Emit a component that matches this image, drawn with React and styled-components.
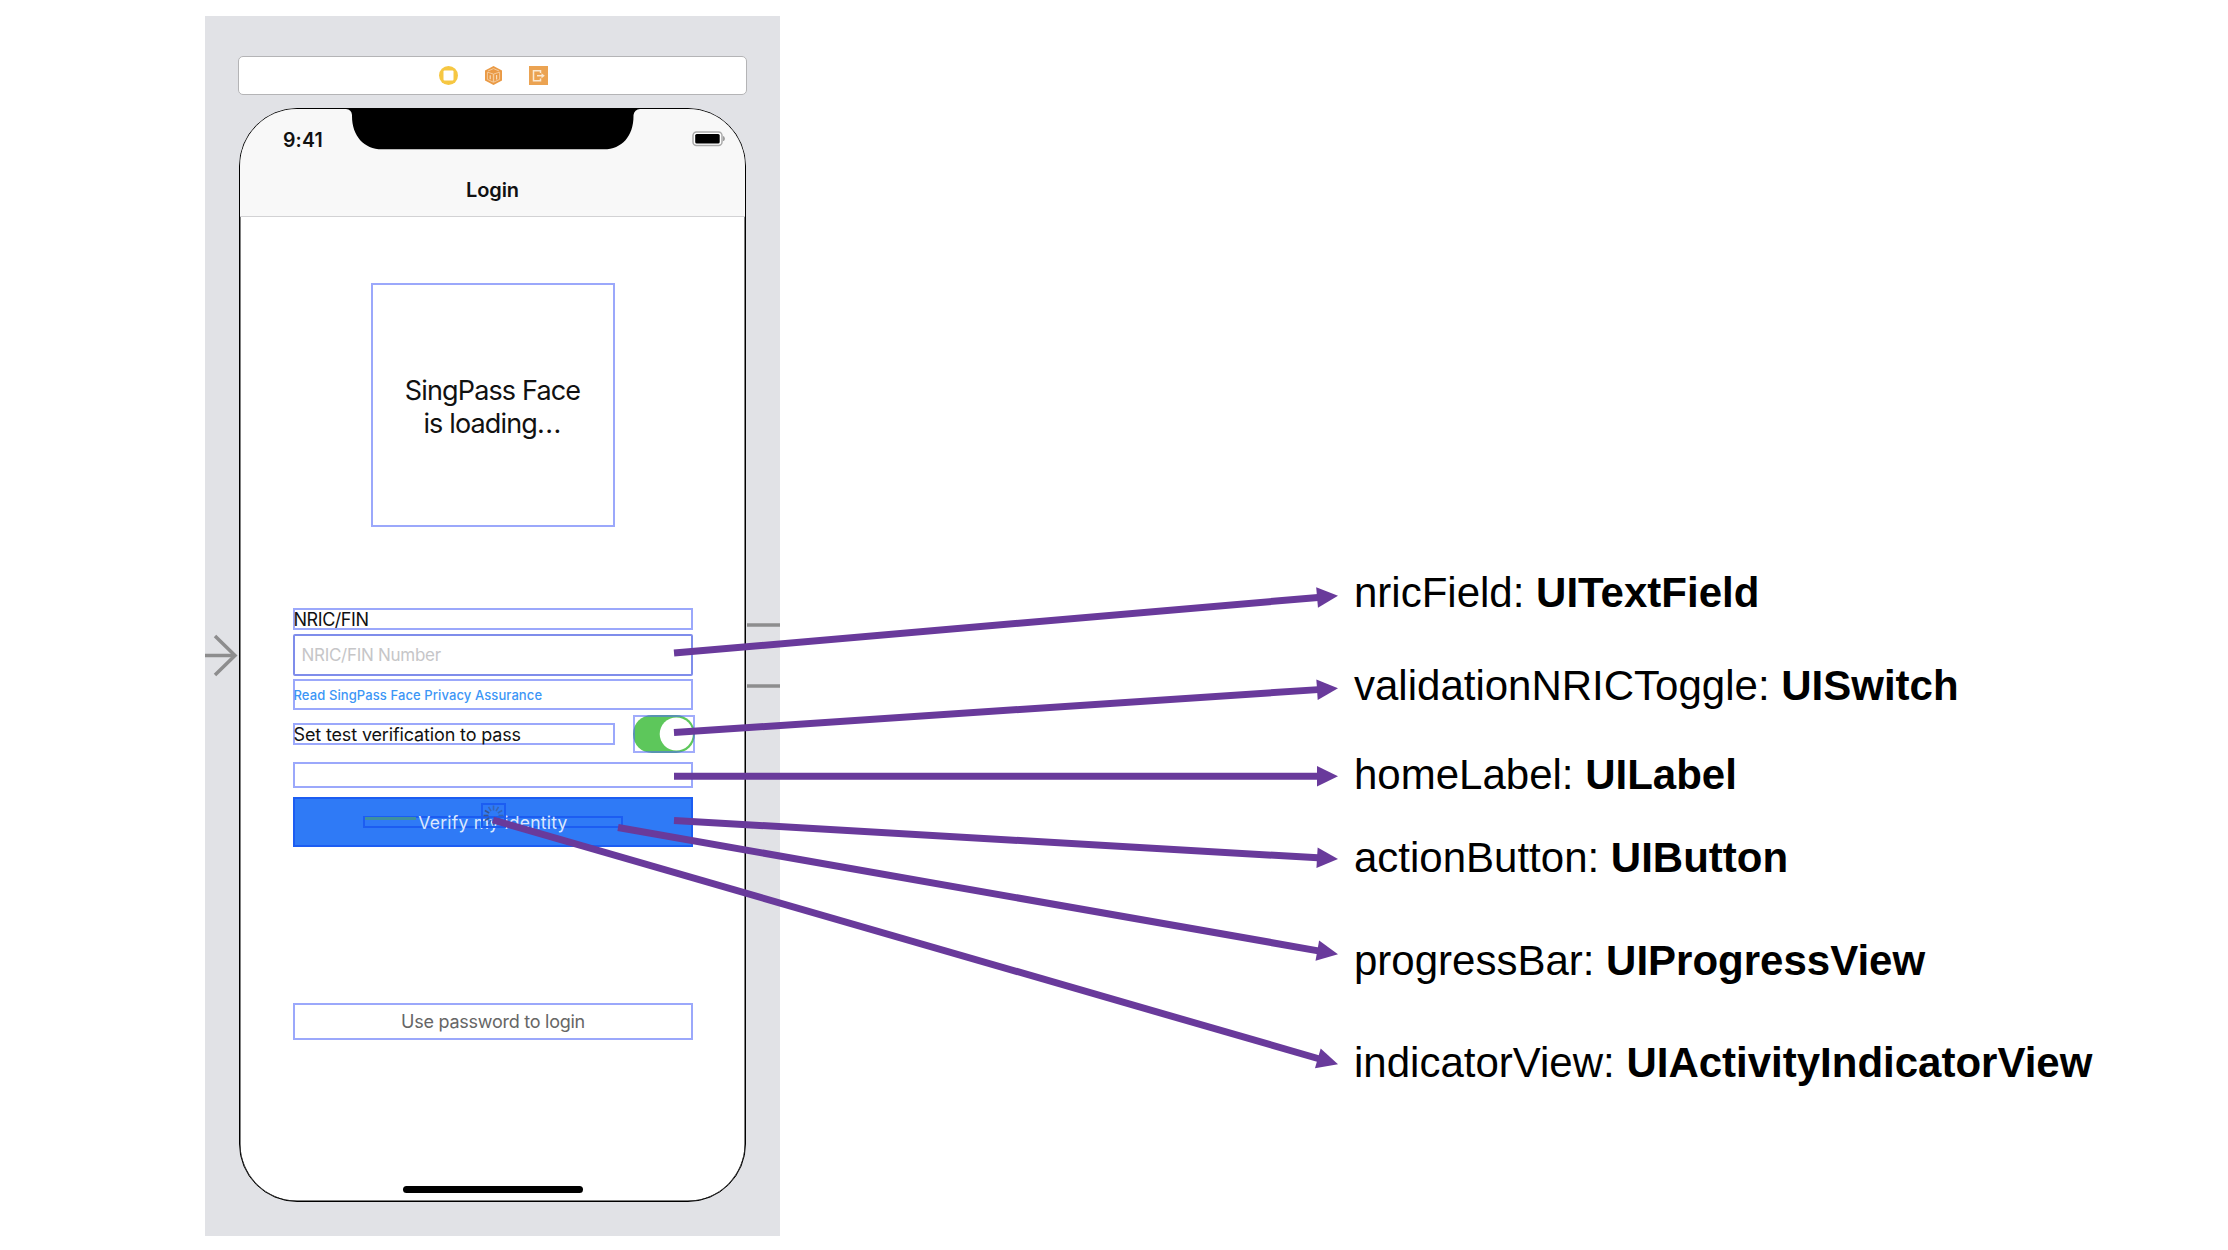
import React from "react";
import styled, { createGlobalStyle } from "styled-components";

const Global = createGlobalStyle`
  * { box-sizing: border-box; }
  html, body { margin: 0; padding: 0; background: #fff; }
`;

const Stage = styled.main`
  position: relative;
  display: flex;
  width: 2228px;
  height: 1250px;
  padding: 16px 0 14px 205px;
  overflow: hidden;
  background: #fff;
  font-family: Inter, "Liberation Sans", sans-serif;
`;

const Canvas = styled.section`
  display: flex;
  flex-direction: column;
  align-items: center;
  width: 575px;
  height: 1220px;
  padding-top: 40px;
  background: #e1e2e6;
`;

const SceneDock = styled.header`
  display: flex;
  justify-content: center;
  align-items: center;
  gap: 26px;
  width: 509px;
  height: 39px;
  padding-left: 1px;
  background: #fff;
  border: 1px solid #b4b4b6;
  border-radius: 5px;
`;

const Phone = styled.article`
  display: flex;
  flex-direction: column;
  width: 507px;
  height: 1094px;
  margin-top: 13px;
  background: #fff;
  border: 1px solid #000;
  border-radius: 58px;
  overflow: hidden;
  box-shadow: inset 0 0 0 0.5px #000;
`;

const NavArea = styled.div`
  height: 108px;
  background: #f8f8f8;
  border-bottom: 1px solid #d2d2d4;
`;

const StatusBar = styled.div`
  display: flex;
  height: 60px;
  padding: 0 19px 0 43px;
`;

const Clock = styled.span`
  width: 63px;
  padding-top: 19px;
  font-size: 19.5px;
  line-height: 24px;
  font-weight: 600;
  color: #111;
  letter-spacing: 0.15px;
`;

const Notch = styled.svg`
  display: block;
  width: 294px;
  height: 42px;
`;

const Battery = styled.svg`
  display: block;
  width: 34px;
  height: 16px;
  margin: 22px 0 0 auto;
`;

const NavTitle = styled.h1`
  margin: 9px 0 0;
  font-size: 20px;
  line-height: 24px;
  font-weight: 600;
  text-align: center;
  color: #111;
  letter-spacing: -0.1px;
`;

const Form = styled.div`
  display: flex;
  flex-direction: column;
  width: 400px;
  margin: 66px 0 0 53px;
`;

const outline = "2px solid #9ba8fb";

const LoadingBox = styled.div`
  display: flex;
  align-items: center;
  justify-content: center;
  align-self: center;
  width: 244px;
  height: 244px;
  padding: 3px 1px 0 0;
  border: ${outline};
  font-size: 27px;
  line-height: 33px;
  letter-spacing: -0.85px;
  text-align: center;
  color: #111;
`;

const Ellipsis = styled.span`
  letter-spacing: 0.4px;
`;

const Outlined = styled.div`
  display: flex;
  align-items: center;
  justify-content: ${(p) => (p.$center ? "center" : "flex-start")};
  width: ${(p) => p.$w || 400}px;
  height: ${(p) => p.$h}px;
  margin-top: ${(p) => p.$gap || 0}px;
  padding-top: ${(p) => p.$drop || 0}px;
  padding-left: ${(p) => p.$inset || 0}px;
  border: ${outline};
  border-color: ${(p) => p.$edge || "#9ba8fb"};
  border-radius: ${(p) => p.$round || 0}px;
  font-size: ${(p) => p.$size || 18}px;
  font-weight: ${(p) => p.$weight || 400};
  letter-spacing: ${(p) => p.$track || 0}px;
  line-height: 18px;
  text-indent: ${(p) => (p.$center ? 0 : -1.5)}px;
  white-space: nowrap;
  color: ${(p) => p.$color || "#111"};
`;

const ToggleRow = styled.div`
  display: flex;
  justify-content: space-between;
  align-items: center;
  width: 402px;
  height: 38px;
  margin-top: 5px;
`;

const Switch = styled.svg`
  display: block;
  width: 62px;
  height: 38px;
`;

const ActionButton = styled.div`
  position: relative;
  display: flex;
  align-items: center;
  justify-content: center;
  height: 50px;
  margin-top: 9px;
  background: #2f7af6;
  border: 2px solid #1c5df2;
  font-size: 17.5px;
  letter-spacing: 0.25px;
  color: #dbe8fe;
`;

const ActionLabel = styled.span`
  position: relative;
  z-index: 1;
`;

const ProgressOutline = styled.div`
  position: absolute;
  left: 68px;
  top: 17px;
  width: 260px;
  height: 12px;
  border: 2px solid #1c5df2;
`;

const ProgressFill = styled.div`
  width: 51px;
  height: 3px;
  margin-top: -1px;
  background: #3f909f;
`;

const Spinner = styled.svg`
  position: absolute;
  z-index: 2;
  left: 186px;
  top: 4px;
  width: 25px;
  height: 25px;
`;

const HomeIndicator = styled.div`
  align-self: center;
  width: 180px;
  height: 7px;
  margin-top: 146px;
  border-radius: 4px;
  background: #000;
`;

const Legend = styled.section`
  display: flex;
  flex-direction: column;
  margin: 553px 0 0 574px;
  font-family: "Liberation Sans", Arial, sans-serif;
`;

const LegendItem = styled.p`
  height: 48px;
  margin: ${(p) => p.$gap}px 0 0;
  font-size: 42px;
  line-height: 48px;
  white-space: nowrap;
  color: #000;
`;

const Kind = styled.strong`
  font-weight: 700;
`;

const Overlay = styled.svg`
  position: absolute;
  z-index: 3;
  left: 0;
  top: 0;
  width: 2228px;
  height: 1250px;
  pointer-events: none;
`;

const items = [
  { name: "nricField:", kind: "UITextField", gap: 0 },
  { name: "validationNRICToggle:", kind: "UISwitch", gap: 45 },
  { name: "homeLabel:", kind: "UILabel", gap: 41 },
  { name: "actionButton:", kind: "UIButton", gap: 35 },
  { name: "progressBar:", kind: "UIProgressView", gap: 55 },
  { name: "indicatorView:", kind: "UIActivityIndicatorView", gap: 54 },
];

const arrows = [
  [674, 653, 1338, 595.7],
  [674, 732.5, 1338, 688.3],
  [674, 776.3, 1338, 776.3],
  [674, 820.5, 1338, 859],
  [618, 827.5, 1338, 954.3],
  [493, 820, 1338, 1064.3],
];

function Arrow({ line: [x1, y1, x2, y2] }) {
  const len = Math.hypot(x2 - x1, y2 - y1);
  const ux = (x2 - x1) / len;
  const uy = (y2 - y1) / len;
  const bx = x2 - ux * 21;
  const by = y2 - uy * 21;
  return (
    <g>
      <line x1={x1} y1={y1} x2={bx + ux} y2={by + uy} stroke="#693a9b" strokeWidth="7" />
      <polygon
        fill="#693a9b"
        points={`${x2},${y2} ${bx - uy * 10.3},${by + ux * 10.3} ${bx + uy * 10.3},${by - ux * 10.3}`}
      />
    </g>
  );
}

function SceneIcons() {
  return (
    <>
      <svg width="19" height="19" viewBox="0 0 19 19">
        <circle cx="9.5" cy="9.5" r="9.5" fill="#f6c742" />
        <rect x="4.5" y="4.5" width="10" height="10" rx="1" fill="#fff" />
      </svg>
      <svg width="19" height="19" viewBox="0 0 19 19">
        <path d="M9.5 0 L18 4.4 V14.4 L9.5 19 L1 14.4 V4.4 Z" fill="#ea9a45" />
        <path
          d="M3.4 6.2 L9.3 8 V16.2 L3.4 13.4 Z M15.6 6.2 L9.7 8 V16.2 L15.6 13.4 Z M4 5 L9.5 2.6 L15 5"
          fill="none"
          stroke="#f6cfa3"
          strokeWidth="0.9"
        />
        <path d="M6.2 9.2v4 M12.6 9v4.4" stroke="#f8dcbc" strokeWidth="1.2" />
      </svg>
      <svg width="19" height="19" viewBox="0 0 19 19">
        <rect width="19" height="19" fill="#eba352" />
        <path d="M11.5 7 V4.7 H4.5 V14.7 H11.5 V12.4" fill="none" stroke="#fbe9d3" strokeWidth="1.5" />
        <path d="M8 9.7 H13.5" stroke="#fbe9d3" strokeWidth="1.5" />
        <path d="M12.5 7.2 L15.8 9.7 L12.5 12.2 Z" fill="#fbe9d3" />
      </svg>
    </>
  );
}

export default function App() {
  return (
    <Stage>
      <Global />
      <Canvas>
        <SceneDock>
          <SceneIcons />
        </SceneDock>
        <Phone>
          <NavArea>
            <StatusBar>
              <Clock>9:41</Clock>
              <Notch viewBox="0 0 294 42">
                <path d="M0 0 H294 Q288.5 0.5 287.5 6 V7 C287.5 27 276 40.3 258 40.3 H36 C18 40.3 6 27 6 7 V6 Q5.5 0.5 0 0 Z" fill="#000" />
              </Notch>
              <Battery viewBox="0 0 34 16">
                <rect x="1" y="1" width="29" height="13.4" rx="3.5" fill="#fff" stroke="#aaa" strokeWidth="1.5" />
                <rect x="3.2" y="3" width="24.5" height="9.6" rx="1.5" fill="#000" />
                <path d="M31.6 5.5 Q33.2 7.6 31.6 9.8 Z" fill="#999" stroke="#999" />
              </Battery>
            </StatusBar>
            <NavTitle>Login</NavTitle>
          </NavArea>
          <Form>
            <LoadingBox>
              <span>
                SingPass Face
                <br />
                is loading<Ellipsis>...</Ellipsis>
              </span>
            </LoadingBox>
            <Outlined $h={22} $gap={81} $drop={2} $track={-0.45}>NRIC/FIN</Outlined>
            <Outlined $h={42} $gap={4} $inset={8} $size={17} $track={-0.28} $color="#c6c6c8" $edge="#7f8deb" $round={2}>
              NRIC/FIN Number
            </Outlined>
            <Outlined $h={31} $gap={3} $size={13} $weight={500} $track={0.1} $color="#3c96f6">
              Read SingPass Face Privacy Assurance
            </Outlined>
            <ToggleRow>
              <Outlined $w={322} $h={22} $drop={2} $track={-0.14}>Set test verification to pass</Outlined>
              <Switch viewBox="0 0 62 38">
                <rect x="0" y="0" width="62" height="38" rx="19" fill="#5dc75b" />
                <circle cx="43.3" cy="19" r="16.6" fill="#fff" />
                <rect x="1" y="1" width="60" height="36" fill="none" stroke="#5468f8" strokeOpacity="0.55" strokeWidth="2" />
              </Switch>
            </ToggleRow>
            <Outlined $h={26} $gap={9} />
            <ActionButton>
              <ActionLabel>Verify my identity</ActionLabel>
              <ProgressOutline>
                <ProgressFill />
              </ProgressOutline>
              <Spinner viewBox="0 0 25 25">
                <rect x="1" y="1" width="23" height="23" fill="none" stroke="#1c5df2" strokeWidth="2" />
                {Array.from({ length: 12 }, (_, i) => (
                  <line
                    key={i}
                    x1="12.5"
                    y1="2.5"
                    x2="12.5"
                    y2="7.5"
                    stroke={i > 7 && i < 11 ? "#3a568f" : "#3566b8"}
                    strokeWidth="1.6"
                    transform={`rotate(${i * 30} 12.5 12.5)`}
                  />
                ))}
              </Spinner>
            </ActionButton>
            <Outlined $h={37} $gap={156} $center $drop={1} $track={-0.25} $color="#666">Use password to login</Outlined>
          </Form>
          <HomeIndicator />
        </Phone>
      </Canvas>
      <Legend>
        {items.map((it) => (
          <LegendItem key={it.name} $gap={it.gap}>
            {it.name} <Kind>{it.kind}</Kind>
          </LegendItem>
        ))}
      </Legend>
      <Overlay viewBox="0 0 2228 1250">
        <g fill="none" stroke="#8d8d8e" strokeWidth="3.5">
          <path d="M205 655.5 H235" />
          <path d="M215 636 L235 655.5 L215 675" />
          <path d="M747 625 H780 M747 686 H780" />
        </g>
        {arrows.map((line) => (
          <Arrow key={line[3]} line={line} />
        ))}
      </Overlay>
    </Stage>
  );
}
